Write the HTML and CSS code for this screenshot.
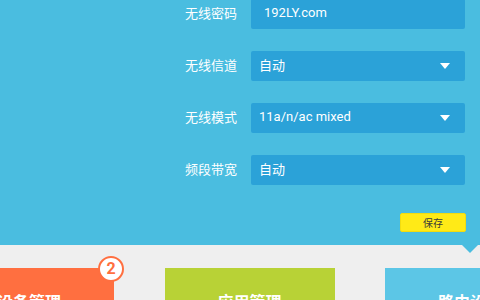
FILE: index.html
```html
<!DOCTYPE html>
<html lang="zh-CN">

<head>
    <meta charset="UTF-8">
    <meta name="viewport" content="width=device-width, initial-scale=1.0">
    <title>无线设置</title>
    <link rel="stylesheet" href="styles.css">
</head>

<body>
    <div class="panel">
        <div class="form">
            <div class="row">
                <label class="label">无线密码</label>
                <div class="field text">192LY.com</div>
            </div>
            <div class="row">
                <label class="label">无线信道</label>
                <div class="field select">自动<span class="arrow"></span></div>
            </div>
            <div class="row">
                <label class="label">无线模式</label>
                <div class="field select">11a/n/ac mixed<span class="arrow"></span></div>
            </div>
            <div class="row">
                <label class="label">频段带宽</label>
                <div class="field select">自动<span class="arrow"></span></div>
            </div>
        </div>
        <div class="actions">
            <button class="save">保存</button>
        </div>
        <div class="pointer"></div>
    </div>
    <ul class="menu">
        <li class="card orange">设备管理<span class="badge">2</span></li>
        <li class="card green">应用管理</li>
        <li class="card blue">路由设置</li>
    </ul>
</body>

</html>
```

FILE: styles.css
```css
body {
    margin: 0;
    width: 480px;
    height: 300px;
    overflow: hidden;
    background-color: #efefef;
    font-family: "Roboto", "Noto Sans CJK SC", sans-serif;
}

.panel {
    position: relative;
    height: 246px;
    background-color: #4abde0;
    box-sizing: border-box;
    padding-right: 15px;
}

.form {
    display: flex;
    flex-direction: column;
    gap: 22px;
    margin-top: -1px;
}

.row {
    display: flex;
    align-items: center;
    gap: 14px;
}

.label {
    width: 237px;
    padding-bottom: 4px;
    text-align: right;
    font-size: 13px;
    color: #fff;
}

.field {
    display: flex;
    align-items: center;
    width: 214px;
    height: 30px;
    box-sizing: border-box;
    padding-left: 8px;
    padding-bottom: 3px;
    border-radius: 2px;
    background-color: #2ba2d8;
    font-size: 13px;
    color: #fff;
}

.field.text {
    padding-left: 13px;
}

.arrow {
    margin-left: auto;
    margin-right: 15px;
    margin-top: 2px;
    width: 0;
    height: 0;
    border-left: 5px solid transparent;
    border-right: 5px solid transparent;
    border-top: 6px solid #fff;
}

.actions {
    display: flex;
    justify-content: flex-end;
    margin-top: 28px;
    margin-right: -1px;
}

.save {
    width: 66px;
    height: 19px;
    padding: 0;
    border: 1px solid #f2dc10;
    border-radius: 2px;
    background-color: #ffea17;
    font-family: "Noto Sans CJK SC", sans-serif;
    font-size: 10px;
    line-height: 17px;
    color: #3a3a3a;
}

.pointer {
    position: absolute;
    left: 462px;
    bottom: -8px;
    width: 0;
    height: 0;
    border-left: 8px solid transparent;
    border-right: 8px solid transparent;
    border-top: 8px solid #4abde0;
}

.menu {
    display: flex;
    gap: 50.5px;
    margin: 23px 0 0 -56px;
    padding: 0;
}

.menu li {
    list-style: none;
}

.card {
    position: relative;
    flex: none;
    width: 170px;
    height: 120px;
    box-sizing: border-box;
    padding-top: 21px;
    text-align: center;
    font-family: "Noto Sans CJK SC", sans-serif;
    font-size: 16px;
    font-weight: bold;
    line-height: 24px;
    color: #fff;
}

.orange {
    background-color: #ff6f40;
}

.green {
    background-color: #b8d236;
}

.blue {
    background-color: #5cc6e6;
}

.badge {
    position: absolute;
    top: -12px;
    right: -10px;
    width: 22px;
    height: 22px;
    border: 2px solid #ff6f40;
    border-radius: 50%;
    background-color: #fff;
    font-family: "Roboto", sans-serif;
    font-size: 16px;
    font-weight: bold;
    line-height: 22px;
    color: #ff6f40;
}
```
